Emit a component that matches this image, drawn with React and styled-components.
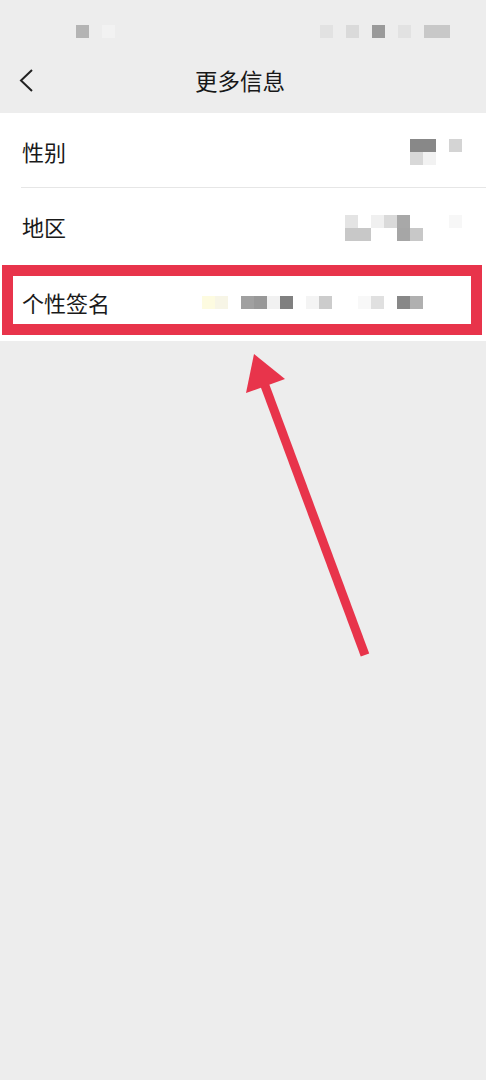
import React from "react";
import styled, { createGlobalStyle } from "styled-components";

const Global = createGlobalStyle`
  html, body { margin: 0; padding: 0; background: #ededed; }
  body { font-family: "Noto Sans CJK SC", "Noto Sans", sans-serif; }
`;

const Page = styled.div`
  position: relative;
  width: 486px;
  height: 1080px;
  background: #ededed;
  overflow: hidden;
`;

const StatusBar = styled.div`
  height: 60px;
  display: flex;
  align-items: flex-start;
  padding: 25px 0 0 76px;
  box-sizing: border-box;
  gap: 205px;
`;

const NavBar = styled.div`
  height: 53px;
  display: flex;
  align-items: center;
  justify-content: center;
  position: relative;
  padding: 0 6px 12px 0;
  box-sizing: border-box;
`;

const BackButton = styled.div`
  position: absolute;
  left: 18px;
  top: 9px;
  width: 18px;
  height: 24px;
  display: flex;
`;

const Title = styled.div`
  font-size: 22.5px;
  color: #181818;
  letter-spacing: 0;
  line-height: 1;
`;

const List = styled.div`
  background: #ffffff;
  padding-bottom: 3px;
`;

const Row = styled.div`
  position: relative;
  height: 75px;
  display: flex;
  align-items: center;
  justify-content: space-between;
  padding-left: 22px;
  padding-right: ${(p) => p.$pr}px;
  box-sizing: border-box;
  &::after {
    content: "";
    display: ${(p) => (p.$divider ? "block" : "none")};
    position: absolute;
    left: 21px;
    right: 0;
    bottom: 0;
    height: 1px;
    background: #e6e6e6;
  }
`;

const Label = styled.div`
  font-size: 22px;
  color: #1a1a1a;
  line-height: 1;
  margin-top: ${(p) => p.$mt || 0}px;
`;

const Mosaic = styled.div`
  display: grid;
  grid-template-columns: repeat(${(p) => p.$cols}, 13px);
  grid-auto-rows: 13px;
  margin-top: ${(p) => p.$mt || 0}px;
`;

const Cell = styled.div`
  grid-column: ${(p) => p.$c + 1};
  grid-row: ${(p) => p.$r + 1};
  background: ${(p) => p.$bg};
`;

const Highlight = styled.div`
  position: absolute;
  left: 2px;
  right: 4px;
  top: 2px;
  bottom: 3px;
  border: 11px solid #e8344b;
  pointer-events: none;
`;

const ArrowLayer = styled.svg`
  position: absolute;
  left: 0;
  top: 0;
  pointer-events: none;
`;

const MosaicBlock = ({ cols, cells, mt }) => (
  <Mosaic $cols={cols} $mt={mt}>
    {cells.map(([c, r, bg], i) => (
      <Cell key={i} $c={c} $r={r} $bg={bg} />
    ))}
  </Mosaic>
);

const statusLeft = [
  [0, 0, "#b4b4b4"],
  [2, 0, "#f2f2f2"],
];
const statusRight = [
  [0, 0, "#e2e2e2"],
  [2, 0, "#dadada"],
  [4, 0, "#9a9a9a"],
  [6, 0, "#e2e2e2"],
  [8, 0, "#c8c8c8"],
  [9, 0, "#c8c8c8"],
];
const genderCells = [
  [0, 0, "#888888"],
  [1, 0, "#888888"],
  [3, 0, "#d4d4d4"],
  [0, 1, "#d8d8d8"],
  [1, 1, "#f2f2f2"],
];
const regionCells = [
  [0, 0, "#e4e4e4"],
  [2, 0, "#f0f0f0"],
  [3, 0, "#dadada"],
  [4, 0, "#a8a8a8"],
  [8, 0, "#f7f7f7"],
  [0, 1, "#c8c8c8"],
  [1, 1, "#c8c8c8"],
  [4, 1, "#a6a6a6"],
  [5, 1, "#c8c8c8"],
];
const signCells = [
  [0, 0, "#fdfbe0"],
  [1, 0, "#f7f5e6"],
  [3, 0, "#a0a0a0"],
  [4, 0, "#989898"],
  [5, 0, "#f1f1f1"],
  [6, 0, "#808080"],
  [8, 0, "#f4f4f4"],
  [9, 0, "#cccccc"],
  [12, 0, "#f8f8f8"],
  [13, 0, "#e0e0e0"],
  [15, 0, "#888888"],
  [16, 0, "#b0b0b0"],
];

export default function App() {
  return (
    <Page>
      <Global />
      <StatusBar>
        <MosaicBlock cols={3} cells={statusLeft} />
        <MosaicBlock cols={10} cells={statusRight} />
      </StatusBar>
      <NavBar>
        <BackButton>
          <svg width="18" height="24" viewBox="0 0 18 24">
            <path d="M14 1 L3 11.5 L14 22" fill="none" stroke="#222" strokeWidth="2" />
          </svg>
        </BackButton>
        <Title>更多信息</Title>
      </NavBar>
      <List>
        <Row $divider $pr={24}>
          <Label>性别</Label>
          <MosaicBlock cols={4} cells={genderCells} mt={2} />
        </Row>
        <Row $pr={24}>
          <Label>地区</Label>
          <MosaicBlock cols={9} cells={regionCells} mt={5} />
        </Row>
        <Row $pr={63}>
          <Label $mt={2}>个性签名</Label>
          <MosaicBlock cols={17} cells={signCells} mt={4} />
          <Highlight />
        </Row>
      </List>
      <ArrowLayer width="486" height="700" viewBox="0 0 486 700">
        <line x1="365" y1="655" x2="264" y2="383" stroke="#e8344b" strokeWidth="9" />
        <polygon points="254,354 246,393 285,379" fill="#e8344b" />
      </ArrowLayer>
    </Page>
  );
}
